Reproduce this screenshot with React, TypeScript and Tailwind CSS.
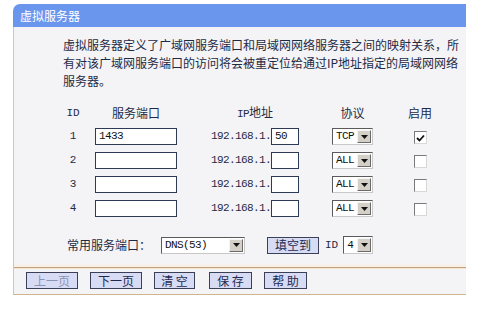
import React from "react";

const CJK = "font-['Noto_Sans_CJK_SC','Liberation_Sans',sans-serif]";
const MONO = "font-['Liberation_Mono','Noto_Sans_CJK_SC',monospace]";

function Arrow() {
  return (
    <svg width="7" height="4" viewBox="0 0 7 4">
      <path d="M0 0 H7 L3.5 4 Z" fill="#111" />
    </svg>
  );
}

function Sel({ cls, label }: { cls: string; label: string }) {
  return (
    <div
      className={`flex h-[17px] items-stretch border border-t-[#5a5a5a] border-l-[#5a5a5a] border-b-[#c8c8c8] border-r-[#c8c8c8] bg-white ${cls}`}
    >
      <div
        className={`flex flex-1 items-center pl-[3px] text-[11px] tracking-[-0.6px] text-[#111] ${MONO}`}
      >
        {label}
      </div>
      <div className="my-[1px] mr-[1px] flex w-[14px] items-center justify-center border border-t-[#f4f4f4] border-l-[#f4f4f4] border-b-[#6a6a6a] border-r-[#6a6a6a] bg-[#d4d0c8]">
        <Arrow />
      </div>
    </div>
  );
}

function Check({ on }: { on: boolean }) {
  return (
    <div className="flex h-[13px] w-[13px] items-center justify-center border border-t-[#7a7a7a] border-l-[#7a7a7a] border-b-[#d8d8d8] border-r-[#d8d8d8] bg-white">
      {on && (
        <svg width="9" height="8" viewBox="0 0 9 8">
          <path d="M1 4 L3.5 6.5 L8 1.5" stroke="#111" strokeWidth="1.8" fill="none" />
        </svg>
      )}
    </div>
  );
}

function Input({ cls, value }: { cls: string; value?: string }) {
  return (
    <div
      className={`flex h-[17px] items-center border border-[#2c3a55] bg-white pl-[3px] text-[11px] tracking-[-0.6px] text-[#111] ${MONO} ${cls}`}
    >
      {value}
    </div>
  );
}

function Btn({ cls, label, dim }: { cls: string; label: string; dim?: boolean }) {
  return (
    <div
      className={`flex h-[17px] items-center justify-center border border-[#3a4058] bg-[#d7dcf4] text-[12px] leading-none ${
        dim ? "text-[#8a93b8]" : "text-[#1f2a50]"
      } ${CJK} ${cls}`}
    >
      {label}
    </div>
  );
}

const rows = [
  { id: "1", port: "1433", ip: "50", proto: "TCP", on: true },
  { id: "2", port: "", ip: "", proto: "ALL", on: false },
  { id: "3", port: "", ip: "", proto: "ALL", on: false },
  { id: "4", port: "", ip: "", proto: "ALL", on: false },
];

export default function App() {
  return (
    <div className={`h-[314px] w-[485px] overflow-hidden bg-white ${CJK}`}>
      <div className="ml-[13px] w-[453px] pt-[4px]">
        {/* title bar */}
        <div className="flex h-[23px] items-center rounded-tl-[7px] bg-[#6a96ee] pl-[7px] text-[12px] text-white">
          虚拟服务器
        </div>
        {/* body */}
        <div className="border-l border-[#d9c8a4] bg-[#f4f4f6]">
          <div className="pl-[49px] pt-[9px] text-[12px] leading-[18px] text-[#1f2a44]">
            <div>虚拟服务器定义了广域网服务端口和局域网网络服务器之间的映射关系，所</div>
            <div>有对该广域网服务端口的访问将会被重定位给通过IP地址指定的局域网网络</div>
            <div>服务器。</div>
          </div>

          {/* table header */}
          <div className="mt-[14px] flex h-[18px] items-center pl-[49px] text-[12px] text-[#1f2a44]">
            <div className={`w-[20px] text-center text-[11px] ${MONO}`}>ID</div>
            <div className="ml-[12px] w-[82px] text-center">服务端口</div>
            <div className="ml-[34px] w-[88px] text-center">
              <span className={`text-[11px] tracking-[-0.6px] ${MONO}`}>IP</span>地址
            </div>
            <div className="ml-[33px] w-[41px] text-center">协议</div>
            <div className="ml-[35px] w-[24px] text-center">启用</div>
          </div>

          {/* rows */}
          <div className="mt-[2px]">
            {rows.map((r) => (
              <div key={r.id} className="flex h-[24px] items-start pl-[49px] pt-[4px] text-[#1f2a44]">
                <div className={`flex h-[17px] w-[20px] items-center justify-center text-[11px] ${MONO}`}>
                  {r.id}
                </div>
                <Input cls="ml-[12px] w-[82px]" value={r.port} />
                <div className="ml-[34px] flex w-[88px] items-center">
                  <div className={`flex h-[17px] w-[60px] items-end pb-[1px] text-[11px] tracking-[-0.6px] ${MONO}`}>
                    192.168.1.
                  </div>
                  <Input cls="w-[28px]" value={r.ip} />
                </div>
                <Sel cls="ml-[33px] w-[41px]" label={r.proto} />
                <div className="ml-[35px] flex h-[17px] w-[24px] items-center justify-center pt-[2px]">
                  <Check on={r.on} />
                </div>
              </div>
            ))}
          </div>

          {/* common ports */}
          <div className="mt-[16px] flex h-[18px] items-center pl-[53px] text-[12px] text-[#1f2a44]">
            <div className="w-[94px]">常用服务端口：</div>
            <Sel cls="w-[84px]" label="DNS(53)" />
            <Btn cls="ml-[22px] w-[52px]" label="填空到" />
            <div className={`ml-[6px] text-[11px] ${MONO}`}>ID</div>
            <Sel cls="ml-[5px] w-[30px] h-[18px]" label="4" />
          </div>

          <div className="mt-[9px] h-[4px] bg-gradient-to-b from-[#f4f4f6] to-[#fbeee0]" />
          <div className="h-[1px] bg-[#c4a47a]" />
          <div className="h-[1px] bg-[#f1e4d4]" />

          {/* bottom buttons */}
          <div className="flex h-[25px] items-start pl-[12px] pt-[3px]">
            <Btn cls="w-[52px]" label="上一页" dim />
            <Btn cls="ml-[12px] w-[52px]" label="下一页" />
            <Btn cls="ml-[12px] w-[41px]" label="清 空" />
            <Btn cls="ml-[14px] w-[43px]" label="保 存" />
            <Btn cls="ml-[12px] w-[43px]" label="帮 助" />
          </div>
        </div>
        <div className="h-[1px] bg-[#cfb58e]" />
      </div>
    </div>
  );
}
